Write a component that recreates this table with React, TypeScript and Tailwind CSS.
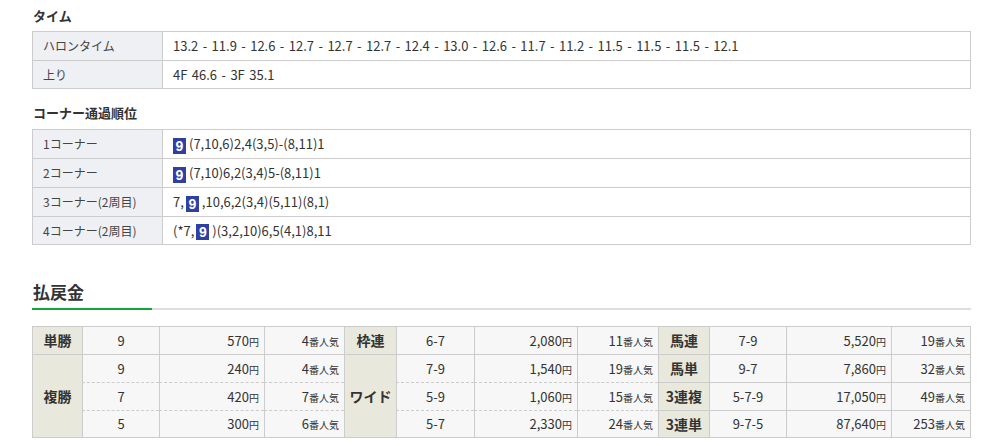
import React from "react";

const FONT = { fontFamily: '"Noto Sans CJK JP", "Noto Sans", sans-serif' };

function Badge({ n }: { n: string }) {
  return (
    <span
      className="inline-flex items-center justify-center w-[13px] h-[16px] bg-[#2f40a5] text-white font-bold text-[14px] leading-none align-middle mr-[3px]"
      style={{ fontFamily: '"Liberation Sans", Arial, sans-serif' }}
    >
      {n}
    </span>
  );
}

function InfoTable({
  rows,
  wordSpace,
}: {
  rows: { label: string; value: React.ReactNode }[];
  wordSpace?: boolean;
}) {
  return (
    <table className="w-full border-separate border-spacing-0 text-[13px] text-[#333]">
      <tbody>
        {rows.map((r, i) => {
          const last = i === rows.length - 1;
          return (
            <tr key={i} className="h-[29px]">
              <td
                className={`w-[130px] bg-[#eef0f3] border-l border-t border-[#cccccc] pl-[10px] text-[12px] text-[#444] align-middle ${last ? "border-b" : ""}`}
              >
                {r.label}
              </td>
              <td
                className={`border-l border-t border-r border-[#cccccc] pl-[10px] align-middle ${last ? "border-b" : ""} ${wordSpace ? "[word-spacing:1.5px]" : ""}`}
              >
                {r.value}
              </td>
            </tr>
          );
        })}
      </tbody>
    </table>
  );
}

type Cell = { horse: string; amount: string; pop: string };

function Amount({ v }: { v: string }) {
  return (
    <>
      {v}
      <span className="text-[10px]">円</span>
    </>
  );
}
function Pop({ v }: { v: string }) {
  return (
    <>
      {v}
      <span className="text-[10px]">番人気</span>
    </>
  );
}

function PayoutTable() {
  const b = "border-[#cccccc]";
  const labelBase = `bg-[#e9e8dc] text-center text-[14px] text-[#333] border-l border-t ${b}`;
  const labelCls = `${labelBase} font-bold`;
  const labelRight = `${labelBase} font-semibold`;
  const dataBg = "bg-[#f7f7f7]";
  const r1: [string, Cell][] = [
    ["単勝", { horse: "9", amount: "570", pop: "4" }],
    ["枠連", { horse: "6-7", amount: "2,080", pop: "11" }],
    ["馬連", { horse: "7-9", amount: "5,520", pop: "19" }],
  ];
  const fuku: Cell[] = [
    { horse: "9", amount: "240", pop: "4" },
    { horse: "7", amount: "420", pop: "7" },
    { horse: "5", amount: "300", pop: "6" },
  ];
  const wide: Cell[] = [
    { horse: "7-9", amount: "1,540", pop: "19" },
    { horse: "5-9", amount: "1,060", pop: "15" },
    { horse: "5-7", amount: "2,330", pop: "24" },
  ];
  const right: [string, Cell][] = [
    ["馬単", { horse: "9-7", amount: "7,860", pop: "32" }],
    ["3連複", { horse: "5-7-9", amount: "17,050", pop: "49" }],
    ["3連単", { horse: "9-7-5", amount: "87,640", pop: "253" }],
  ];

  const dataCells = (c: Cell, dashed: boolean, last: boolean, lastCol: boolean) => {
    const bb = last ? "border-b" : "";
    const top = dashed ? "border-t [border-top-style:dashed]" : "border-t";
    return (
      <>
        <td className={`${dataBg} text-center border-l ${top} ${b} ${bb}`}>{c.horse}</td>
        <td className={`${dataBg} text-right pr-[5px] border-l ${top} ${b} ${bb}`}>
          <Amount v={c.amount} />
        </td>
        <td className={`${dataBg} text-right pr-[5px] border-l ${top} ${b} ${bb} ${lastCol ? "border-r" : ""}`}>
          <Pop v={c.pop} />
        </td>
      </>
    );
  };

  const widths = [50, 77, 105, 80, 52, 78, 103, 81, 51, 77, 105, 80];

  return (
    <table className="w-[939px] table-fixed border-separate border-spacing-0 text-[13px] text-[#333]">
      <colgroup>
        {widths.map((w, i) => (
          <col key={i} style={{ width: w }} />
        ))}
      </colgroup>
      <tbody>
        <tr className="h-[28px]">
          {r1.map(([label, c], i) => (
            <React.Fragment key={i}>
              <td className={i === 2 ? labelRight : labelCls}>{label}</td>
              {dataCells(c, false, false, i === 2)}
            </React.Fragment>
          ))}
        </tr>
        {[0, 1, 2].map((i) => {
          const last = i === 2;
          const dashed = i !== 0;
          return (
            <tr key={i} className="h-[28px]">
              {i === 0 && (
                <td rowSpan={3} className={`${labelCls} border-b`}>
                  複勝
                </td>
              )}
              {dataCells(fuku[i], dashed, last, false)}
              {i === 0 && (
                <td rowSpan={3} className={`${labelCls} border-b`}>
                  ワイド
                </td>
              )}
              {dataCells(wide[i], dashed, last, false)}
              <td className={`${labelRight} ${last ? "border-b" : ""}`}>{right[i][0]}</td>
              {dataCells(right[i][1], false, last, true)}
            </tr>
          );
        })}
      </tbody>
    </table>
  );
}

export default function App() {
  return (
    <div className="bg-white w-[998px] h-[446px] overflow-hidden" style={FONT}>
      <div className="ml-[32px] w-[939px] pt-[6px]">
        <h3 className="text-[13px] font-bold leading-[20px] text-[#333] mb-[5px] pl-px">タイム</h3>
        <InfoTable
          wordSpace
          rows={[
            {
              label: "ハロンタイム",
              value:
                "13.2 - 11.9 - 12.6 - 12.7 - 12.7 - 12.7 - 12.4 - 13.0 - 12.6 - 11.7 - 11.2 - 11.5 - 11.5 - 11.5 - 12.1",
            },
            { label: "上り", value: "4F 46.6 - 3F 35.1" },
          ]}
        />
        <h3 className="text-[13px] font-bold leading-[20px] text-[#333] mt-[14px] mb-[6px] pl-px">
          コーナー通過順位
        </h3>
        <InfoTable
          rows={[
            {
              label: "1コーナー",
              value: (
                <>
                  <Badge n="9" />
                  (7,10,6)2,4(3,5)-(8,11)1
                </>
              ),
            },
            {
              label: "2コーナー",
              value: (
                <>
                  <Badge n="9" />
                  (7,10)6,2(3,4)5-(8,11)1
                </>
              ),
            },
            {
              label: "3コーナー(2周目)",
              value: (
                <>
                  7,
                  <span className="ml-[2px]" />
                  <Badge n="9" />
                  ,10,6,2(3,4)(5,11)(8,1)
                </>
              ),
            },
            {
              label: "4コーナー(2周目)",
              value: (
                <>
                  (*7,
                  <span className="ml-[2px]" />
                  <Badge n="9" />
                  )(3,2,10)6,5(4,1)8,11
                </>
              ),
            },
          ]}
        />
        <div className="mt-[35px] relative border-b-2 border-[#dddddd] pb-[4px]">
          <h3 className="text-[17px] font-semibold leading-[24px] text-[#333] pl-px">払戻金</h3>
          <div className="absolute left-0 bottom-[-2px] w-[120px] h-[2px] bg-[#13a538]" />
        </div>
        <div className="mt-[16px]">
          <PayoutTable />
        </div>
      </div>
    </div>
  );
}
